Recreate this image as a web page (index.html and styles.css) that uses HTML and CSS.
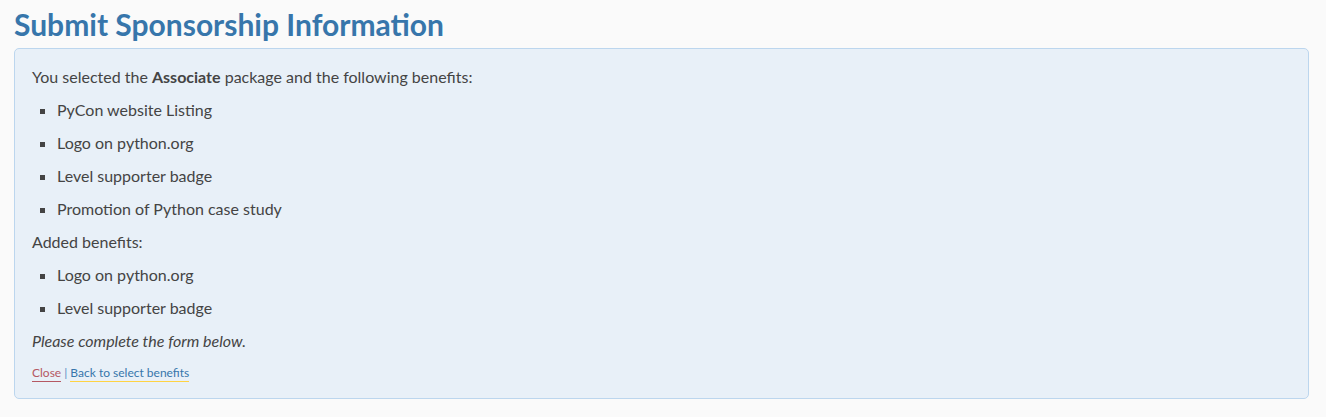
FILE: index.html
```html
<!DOCTYPE html>
<html>
<head>
<meta charset="utf-8">
<link rel="stylesheet" href="styles.css">
</head>
<body>
<main class="page">
  <h1 class="title">Submit Sponsorship Information</h1>
  <section class="notice">
    <p class="line">You selected the <strong>Associate</strong> package and the following benefits:</p>
    <ul class="benefits">
      <li>PyCon website Listing</li>
      <li>Logo on python.org</li>
      <li>Level supporter badge</li>
      <li>Promotion of Python case study</li>
    </ul>
    <p class="line">Added benefits:</p>
    <ul class="benefits">
      <li>Logo on python.org</li>
      <li>Level supporter badge</li>
    </ul>
    <p class="line"><em>Please complete the form below.</em></p>
    <p class="links"><a class="close" href="#">Close</a> <span class="sep">|</span> <a class="back" href="#">Back to select benefits</a></p>
  </section>
</main>
</body>
</html>
```

FILE: styles.css
```css
html, body {
  margin: 0;
  padding: 0;
  background: #fafafa;
}
.page {
  padding: 0 17px 0 14px;
  font-family: Lato, "Liberation Sans", sans-serif;
  color: #444;
}
.title {
  margin: 0;
  padding: 8px 0 7px;
  font-size: 30px;
  line-height: 33px;
  font-weight: 700;
  color: #3776ab;
}
.notice {
  background: #e8f0f8;
  border: 1px solid #bcd6ee;
  border-radius: 5px;
  padding: 17px 17px 16px;
}
.line {
  margin: 0 0 11px;
  font-size: 16px;
  line-height: 22px;
}
.benefits {
  margin: 0 0 11px;
  padding: 0 0 0 25px;
  list-style: square;
  font-size: 16px;
  line-height: 22px;
}
.benefits li {
  margin: 0 0 11px;
}
.benefits li:last-child {
  margin-bottom: 0;
}
.links {
  margin: 0;
  font-size: 12px;
  line-height: 19px;
  color: #3776ab;
}
.links a {
  text-decoration: none;
  padding-bottom: 1px;
}
.close {
  color: #b55863;
  border-bottom: 1px solid #b55863;
}
.sep {
  color: #5a8fc4;
}
.back {
  color: #3776ab;
  border-bottom: 1px solid #ffd343;
}
```
